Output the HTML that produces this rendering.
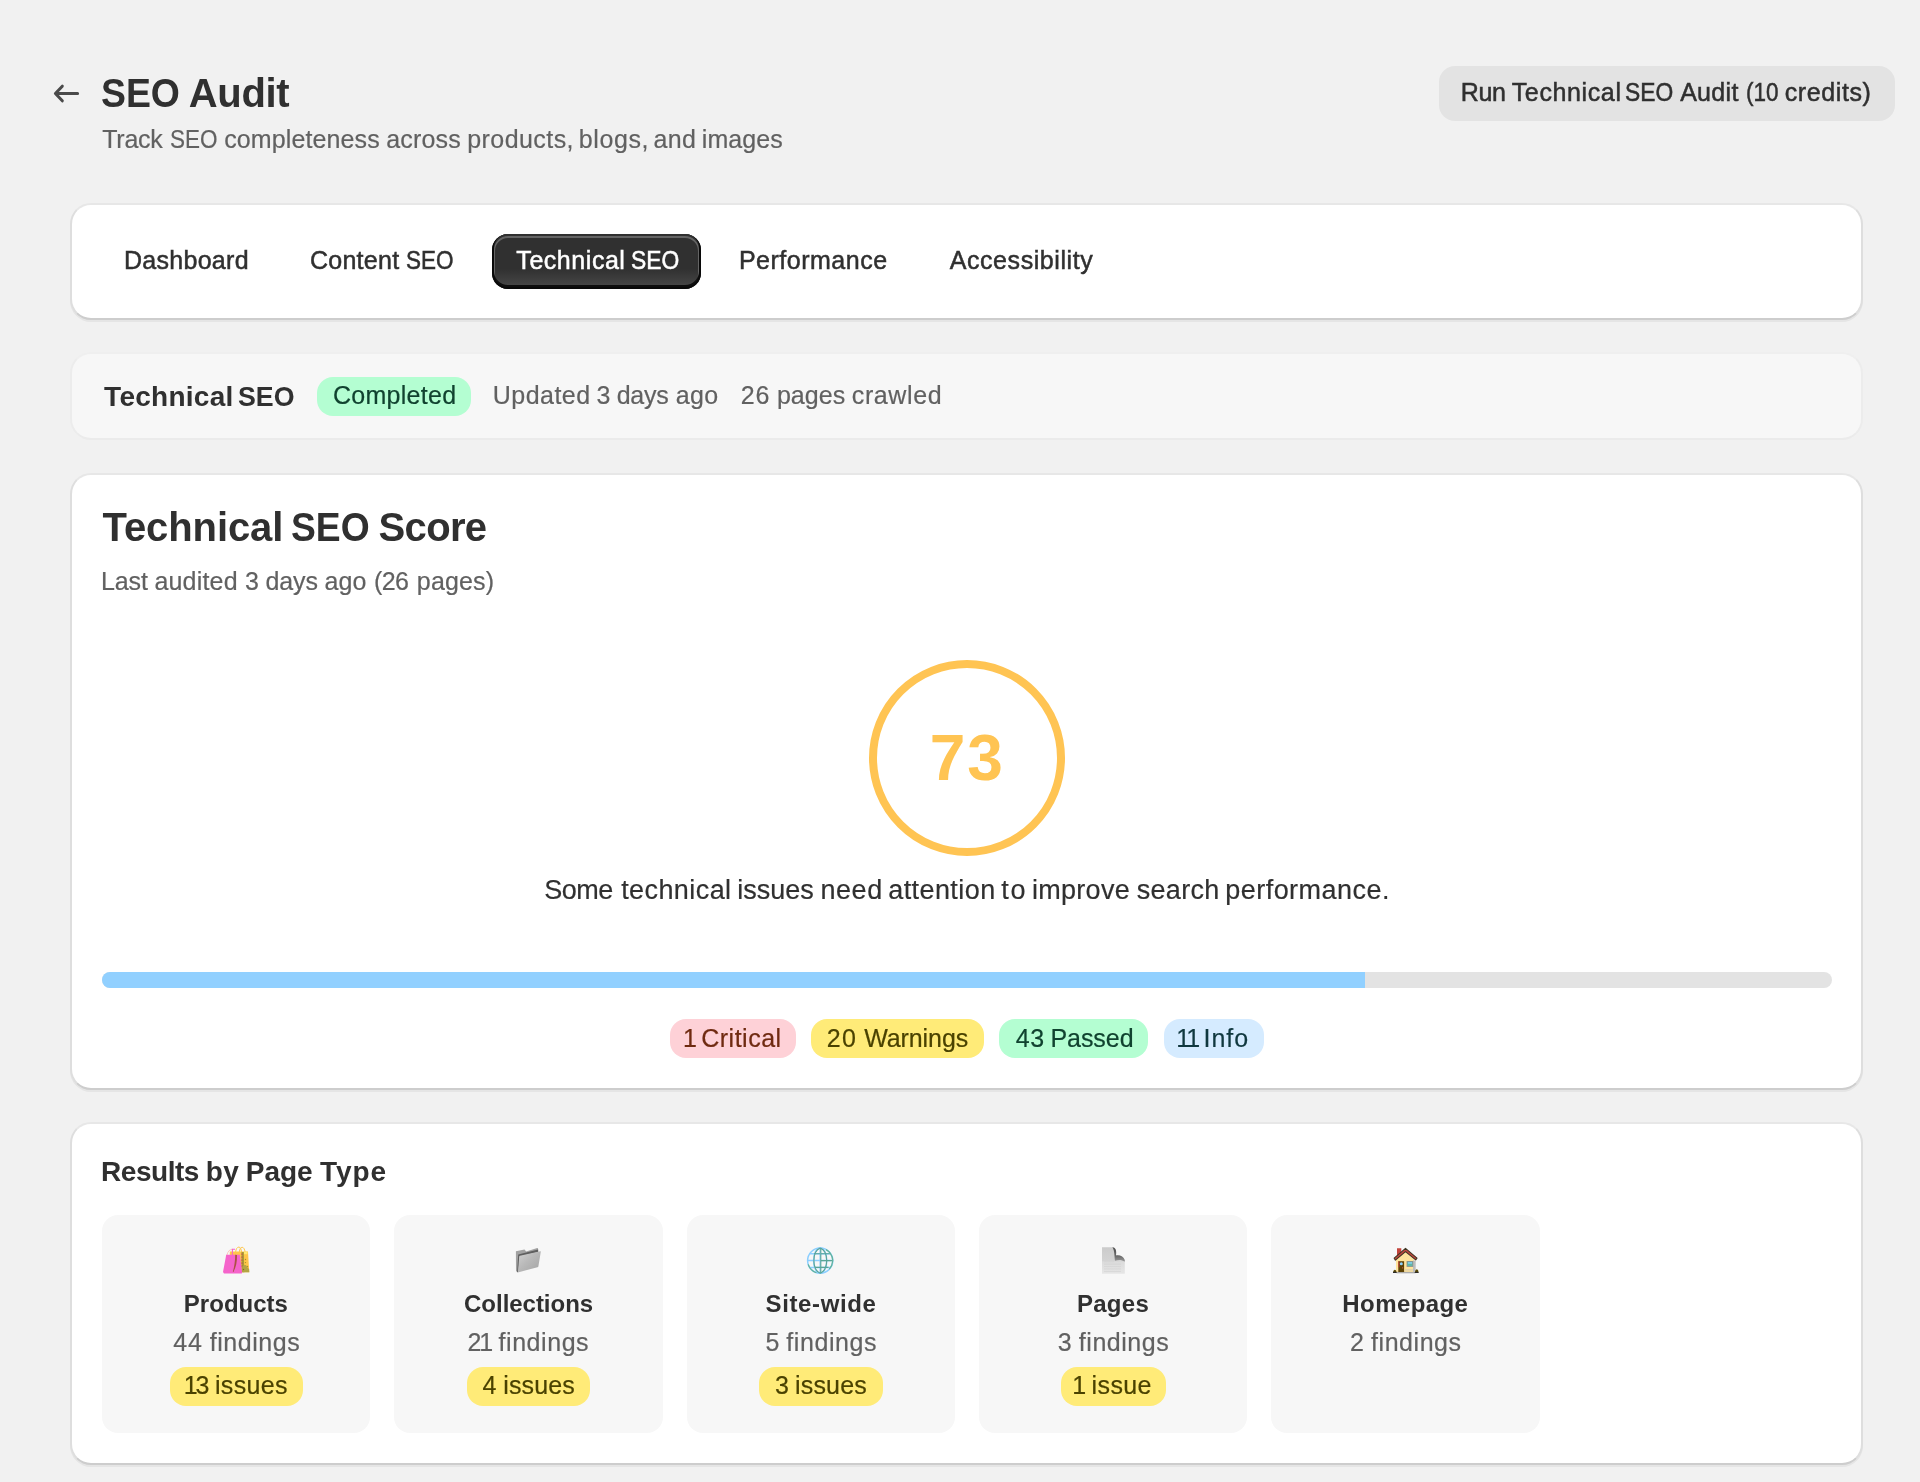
<!DOCTYPE html>
<html lang="en">
<head>
<meta charset="utf-8">
<title>SEO Audit</title>
<style>
*{box-sizing:border-box;margin:0;padding:0}
html,body{width:1920px;height:1482px;overflow:hidden}
body{background:#f1f1f1;font-family:"Liberation Sans",sans-serif;position:relative;color:#303030}
.t{position:absolute;left:0;white-space:nowrap;will-change:transform}
.t span{position:absolute;top:0}
.med{-webkit-text-stroke:.5px}
.abs{position:absolute}
.card{position:absolute;left:70px;width:1793px;background:#fff;border-radius:21px;border-style:solid;border-width:2px;border-color:#e7e7e7 #dedede #cdcdcd #dedede;box-shadow:0 2px 0 rgba(26,26,26,.05)}
#card-tabs{top:203px;height:117px}
#card-status{top:352px;height:88px;background:#f7f7f7;border-color:#efefef #ececec #ebebeb #ececec;box-shadow:none}
#card-score{top:473px;height:617px}
#card-results{top:1121.5px;height:343px}
#btn-run{left:1438.5px;top:66px;width:456px;height:55px;background:#e3e3e3;border-radius:16px}
#btn-active{left:492px;top:234px;width:209px;height:55px;border-radius:16px;background:linear-gradient(180deg,#303030 0%,#303030 63%,#4a4a4a 100%);box-shadow:inset 0 -2px 0 2px rgba(0,0,0,.8),inset 0 0 0 2px #303030,inset 0 1px 0 3px rgba(255,255,255,.25)}
.badge{position:absolute;height:39.5px;border-radius:16px}
#bd-comp{left:317px;top:376.5px;width:154.3px;background:#b4fed2}
#bd-1{left:670px;top:1018.75px;width:126px;background:#fed1d7}
#bd-2{left:811.4px;top:1018.75px;width:172.3px;background:#ffeb78}
#bd-3{left:999.1px;top:1018.75px;width:149.2px;background:#b4fed2}
#bd-4{left:1164.2px;top:1018.75px;width:99.7px;background:#d5ebff}
#ring{left:869px;top:659.75px;width:196px;height:196px;border-radius:50%;border:8px solid #ffc453}
#track{left:102px;top:972px;width:1730px;height:16px;border-radius:8px;background:#e3e3e3;overflow:hidden}
#fill{width:1263px;height:16px;background:#91d0ff}
.tile{position:absolute;top:1215px;width:268.3px;height:218.3px;background:#f7f7f7;border-radius:16px}
.tb{top:1366.75px;background:#ffeb78}
#t_title{top:73px;font-size:40px;line-height:40px;font-weight:700;color:#303030}
#t_sub{top:127px;font-size:25px;line-height:25px;font-weight:400;color:#616161;-webkit-text-stroke:.2px}
#t_run{top:80px;font-size:25px;line-height:25px;font-weight:400;color:#303030}
#t_tab1{top:248px;font-size:25px;line-height:25px;font-weight:400;color:#303030}
#t_tab2{top:248px;font-size:25px;line-height:25px;font-weight:400;color:#303030}
#t_tab3{top:248px;font-size:25px;line-height:25px;font-weight:400;color:#fff}
#t_tab4{top:248px;font-size:25px;line-height:25px;font-weight:400;color:#303030}
#t_tab5{top:248px;font-size:25px;line-height:25px;font-weight:400;color:#303030}
#t_st{top:383px;font-size:28px;line-height:28px;font-weight:700;color:#303030}
#t_comp{top:383px;font-size:25px;line-height:25px;font-weight:400;color:#10422f;-webkit-text-stroke:.2px}
#t_upd{top:383px;font-size:25px;line-height:25px;font-weight:400;color:#616161;-webkit-text-stroke:.2px}
#t_crawl{top:383px;font-size:25px;line-height:25px;font-weight:400;color:#616161;-webkit-text-stroke:.2px}
#t_score{top:507px;font-size:40px;line-height:40px;font-weight:700;color:#303030}
#t_last{top:569px;font-size:25px;line-height:25px;font-weight:400;color:#616161;-webkit-text-stroke:.2px}
#t_73{top:726px;font-size:64px;line-height:64px;font-weight:700;color:#ffc453}
#t_some{top:877px;font-size:27px;line-height:27px;font-weight:400;color:#303030;-webkit-text-stroke:.2px}
#t_b1{top:1026px;font-size:25px;line-height:25px;font-weight:400;color:#6f2a10;-webkit-text-stroke:.2px}
#t_b2{top:1026px;font-size:25px;line-height:25px;font-weight:400;color:#4a4200;-webkit-text-stroke:.2px}
#t_b3{top:1026px;font-size:25px;line-height:25px;font-weight:400;color:#10422f;-webkit-text-stroke:.2px}
#t_b4{top:1026px;font-size:25px;line-height:25px;font-weight:400;color:#10383f;-webkit-text-stroke:.2px}
#t_res{top:1158px;font-size:28px;line-height:28px;font-weight:700;color:#303030}
#t_tt0{top:1292px;font-size:24px;line-height:24px;font-weight:700;color:#303030}
#t_tf0{top:1330px;font-size:25px;line-height:25px;font-weight:400;color:#616161;-webkit-text-stroke:.2px}
#t_tb0{top:1373px;font-size:25px;line-height:25px;font-weight:400;color:#4a4200;-webkit-text-stroke:.2px}
#t_tt1{top:1292px;font-size:24px;line-height:24px;font-weight:700;color:#303030}
#t_tf1{top:1330px;font-size:25px;line-height:25px;font-weight:400;color:#616161;-webkit-text-stroke:.2px}
#t_tb1{top:1373px;font-size:25px;line-height:25px;font-weight:400;color:#4a4200;-webkit-text-stroke:.2px}
#t_tt2{top:1292px;font-size:24px;line-height:24px;font-weight:700;color:#303030}
#t_tf2{top:1330px;font-size:25px;line-height:25px;font-weight:400;color:#616161;-webkit-text-stroke:.2px}
#t_tb2{top:1373px;font-size:25px;line-height:25px;font-weight:400;color:#4a4200;-webkit-text-stroke:.2px}
#t_tt3{top:1292px;font-size:24px;line-height:24px;font-weight:700;color:#303030}
#t_tf3{top:1330px;font-size:25px;line-height:25px;font-weight:400;color:#616161;-webkit-text-stroke:.2px}
#t_tb3{top:1373px;font-size:25px;line-height:25px;font-weight:400;color:#4a4200;-webkit-text-stroke:.2px}
#t_tt4{top:1292px;font-size:24px;line-height:24px;font-weight:700;color:#303030}
#t_tf4{top:1330px;font-size:25px;line-height:25px;font-weight:400;color:#616161;-webkit-text-stroke:.2px}
</style>
</head>
<body>
<!-- page header -->
<svg class="abs" style="left:50px;top:80px" width="34" height="28" viewBox="50 80 34 28"><path d="M77.6 93.5H56M62.3 86.2L55.4 93.5L62.3 100.8" fill="none" stroke="#4a4a4a" stroke-width="3" stroke-linecap="round" stroke-linejoin="round"/></svg>
<div class="abs" id="btn-run"></div>
<!-- tabs card -->
<div class="card" id="card-tabs"></div>
<div class="abs" id="btn-active"></div>
<!-- status card -->
<div class="card" id="card-status"></div>
<div class="badge" id="bd-comp"></div>
<!-- score card -->
<div class="card" id="card-score"></div>
<div class="abs" id="ring"></div>
<div class="abs" id="track"><div id="fill"></div></div>
<div class="badge" id="bd-1"></div>
<div class="badge" id="bd-2"></div>
<div class="badge" id="bd-3"></div>
<div class="badge" id="bd-4"></div>
<!-- results card -->
<div class="card" id="card-results"></div>
<div class="tile" style="left:102.00px"></div>
<div class="badge tb" style="left:169.60px;width:133.1px"></div>
<div class="tile" style="left:394.33px"></div>
<div class="badge tb" style="left:466.83px;width:123.3px"></div>
<div class="tile" style="left:686.67px"></div>
<div class="badge tb" style="left:759.07px;width:123.5px"></div>
<div class="tile" style="left:979.00px"></div>
<div class="badge tb" style="left:1060.65px;width:105px"></div>
<div class="tile" style="left:1271.33px"></div>
<!-- tile icons (emoji drawn as inline SVG) -->
<svg class="abs" style="left:220px;top:1244px" width="32" height="32" viewBox="220 1244 32 32">
  <path d="M235.6 1252.2c.3-3.4 1.600-5 3.200-5.100 1.500 0 2.400 1.700 2.700 5M239.300 1252c.4-3.300 1.500-4.800 2.900-4.700 1.400.1 2.400 1.700 3 5" fill="none" stroke="#ffc64a" stroke-width="1"/>
  <path d="M229.800 1251.600H248l1.300 20.700H229.800z" fill="#ffc64a"/>
  <path d="M244 1251.600h3.500v2.600H244z" fill="#ffe873"/>
  <path d="M241.500 1252h2.300l.6 20.300h-2.900z" fill="#a79a35"/>
  <path d="M242 1253.500v14" stroke="#c23a5c" stroke-width="1.100" stroke-dasharray="1.300 1.700" fill="none"/>
  <path d="M242.500 1266.300c2-1.700 3.600-1.600 4.300 0 .6 1.500 1.500 2.400 2.300 2.700l.2 3.300h-6.800z" fill="#b5a544"/>
  <circle cx="245.500" cy="1259.500" r=".7" fill="#a8912c"/><circle cx="245.500" cy="1262.600" r=".7" fill="#a8912c"/><circle cx="247.500" cy="1266.500" r=".7" fill="#a8912c"/><circle cx="243.500" cy="1269.500" r=".7" fill="#7d7020"/>
  <path d="M227 1255c.8-3.600 2.600-5.600 5.400-5.800" fill="none" stroke="#fcc7c1" stroke-width="1"/>
  <path d="M232.400 1255v-5.700h2.600" fill="none" stroke="#f564cb" stroke-width="1.100"/>
  <path d="M226.200 1254.800h13.600l2.300 17.200-.3 1.400H224l-1-1.500z" fill="#f564cb"/>
  <path d="M235.200 1254.800l1.800.2c.2 6.500-1 12.500-3.600 16.900h-.6c1.700-5.300 2.300-11 2.400-17.100z" fill="#ab5142"/>
</svg>
<svg class="abs" style="left:512px;top:1244px" width="32" height="32" viewBox="512 1244 32 32">
  <defs><linearGradient id="fg" x1="0" y1="0" x2="1" y2="1"><stop offset="0" stop-color="#d2d2d2"/><stop offset=".45" stop-color="#b9b9b9"/><stop offset="1" stop-color="#a3a3a3"/></linearGradient></defs>
  <path d="M515.900 1251.300l8.600-1.800 1.700 1.900 11-3.300c.5-.1.900.2.900.7v3.200l-19.200 4.400-1 15.500-1.900-.6z" fill="#a2a2a2"/>
  <path d="M518.200 1254.600l19.900-5 .1 2.300-18.300 4.500-1.600 15.800h-1.200z" fill="#5f5f5f"/>
  <path d="M519.900 1255.800l20.500-4.600c.3 0 .5.100.4.500l-2.400 14.600c-.1.500-.4.900-1 1l-18.700 4.900c-.4.100-.7-.1-.6-.6l1.100-14.800c0-.5.300-.9.700-1z" fill="url(#fg)"/>
</svg>
<svg class="abs" style="left:804px;top:1244px" width="32" height="32" viewBox="804 1244 32 32">
  <g fill="none" stroke-width="1.500">
    <circle cx="820.200" cy="1260.600" r="12.600" stroke="#8ccfff"/>
    <path d="M807.600 1260.600h25.200M809.600 1253.800h21.200M809.600 1267.400h21.200" stroke="#8ccfff"/>
    <path d="M820.200 1248v25.200" stroke="#8ccfff"/>
    <ellipse cx="820.200" cy="1260.600" rx="6.600" ry="12.600" stroke="#8ccfff"/>
    <path d="M820.800 1248v25.200" stroke="#5aa596" stroke-width="1.100"/>
    <path d="M821 1253.800h9.500M821 1260.600h11.600M815 1267.400h13.500M814 1253.800h6" stroke="#5aa596" stroke-width="1.100"/>
    <path d="M820.200 1248c-8.400 3.400-8.400 21.800 0 25.200M820.200 1248c8.600 3.400 8.600 21.800 0 25.200" stroke="#5aa596" stroke-width="1.100"/>
    <path d="M826 1249.600c4 2 6.400 5.800 6.800 11-.3 3.500-1.500 6.300-3.500 8.500M808.200 1264.400c1.300 4 4.300 7 8.200 8.300" stroke="#62b39b" stroke-width="1.200"/>
  </g>
</svg>
<svg class="abs" style="left:1097px;top:1244px" width="32" height="32" viewBox="1097 1244 32 32">
  <defs><linearGradient id="pg" x1="0" y1="0" x2="0" y2="1"><stop offset="0" stop-color="#cbcbcb"/><stop offset=".5" stop-color="#d3d3d3"/><stop offset=".56" stop-color="#dcdcdc"/><stop offset="1" stop-color="#e6e6e6"/></linearGradient>
  <linearGradient id="pc" x1="0" y1="0" x2="0" y2="1"><stop offset="0" stop-color="#4e4e4e"/><stop offset=".6" stop-color="#6a6a6a"/><stop offset="1" stop-color="#9a9a9a"/></linearGradient></defs>
  <path d="M1102 1247.200h10.500c2.500.3 3.500 2.300 3.500 4.800v3.300c4-.5 7.500 1.200 8.800 4.700v13.500c0 .2-.1.300-.3.300h-22.200c-.2 0-.3-.1-.3-.3z" fill="url(#pg)"/>
  <path d="M1112.400 1247.300c3 .4 3.900 2.600 3.800 5.700l-.2 2.400c4-.6 7.600 1 8.800 4.800l-.1 1.500c-2.700-2-6.200-2.100-9.700-.9-.7-4.800-.3-10.300-2.600-13.500z" fill="url(#pc)"/>
  <path d="M1104 1261.800h10M1104 1264.200h17M1104 1266.600h17M1104 1269h17M1104 1271.400h17" stroke="#d2d2d2" stroke-width=".7"/>
</svg>
<svg class="abs" style="left:1389px;top:1244px" width="32" height="32" viewBox="1389 1244 32 32">
  <path d="M1397 1248.200h4.300v6.500l-4.300 3.500z" fill="#c3443c"/>
  <path d="M1396 1260l9.500-8.200 8.700 7.600v13.400h-18.200z" fill="#ffe49c"/>
  <path d="M1413 1260.500h2.700v11.300h-2.700z" fill="#bdbdbd"/>
  <path d="M1396.500 1271.800h19v1.500h-19z" fill="#ababab"/>
  <path d="M1394.200 1258.200l11.300-9.800 11.500 9.700-1.300 1.800-10.200-8.300-10.100 8.600z" fill="#c3473e" stroke="#3f3522" stroke-width="1.100" stroke-linejoin="round"/>
  <path d="M1398.300 1261.200h5.800v10.800h-5.800z" fill="#5e4305"/>
  <path d="M1398.300 1261.200h1v6h-1z" fill="#c3443c"/>
  <circle cx="1401.300" cy="1263.800" r="1.500" fill="#8fd3ff"/>
  <circle cx="1402.600" cy="1267.800" r=".6" fill="#e0584f"/>
  <path d="M1406.600 1261h6.600v5.900h-6.600z" fill="#8f8f8f"/>
  <path d="M1407.400 1261.800h5v4.300h-5z" fill="#5fb8a7"/>
  <path d="M1408 1262.300h4v1.300h-4z" fill="#8fd3ff"/>
  <path d="M1405.500 1269.800h7.500" stroke="#b9b9c4" stroke-width="1.200" stroke-dasharray="1 1"/>
  <path d="M1393 1272.800c.3-2 1-3 1.800-3 .9 0 1.600 1 1.800 3z" fill="#5b4a06"/>
  <path d="M1414.800 1272.800c.3-2.300 1.100-3.500 2-3.500.9 0 1.700 1.300 1.800 3.500z" fill="#5b4a06"/>
  <path d="M1393 1272.100c.8-.4 2.800-.4 3.600 0v.9h-3.600zM1414.800 1272.100c.8-.4 2.800-.4 3.700 0v.9h-3.700z" fill="#2a2a2a"/>
</svg>

<div class="t" id="t_title"><span style="left:101.04px;transform:scaleX(0.9344);transform-origin:0 0">SEO</span> <span style="left:188.67px;letter-spacing:-0.300px">Audit</span></div>
<div class="t" id="t_sub"><span style="left:102.31px;letter-spacing:-0.266px">Track</span> <span style="left:170.06px;transform:scaleX(0.8994);transform-origin:0 0">SEO</span> <span style="left:224.20px;letter-spacing:0.112px">completeness</span> <span style="left:386.15px;letter-spacing:0.208px">across</span> <span style="left:467.24px;letter-spacing:0.434px">products,</span> <span style="left:578.85px;letter-spacing:0.573px">blogs,</span> <span style="left:653.54px;letter-spacing:0.364px">and</span> <span style="left:701.79px;letter-spacing:0.090px">images</span></div>
<div class="t med" id="t_run"><span style="left:1460.75px;letter-spacing:-0.350px">Run</span> <span style="left:1511.74px;letter-spacing:0.622px">Technical</span> <span style="left:1625.29px;transform:scaleX(0.9125);transform-origin:0 0">SEO</span> <span style="left:1680.14px;letter-spacing:0.308px">Audit</span> <span style="left:1746.08px;transform:scaleX(0.8986);transform-origin:0 0">(10</span> <span style="left:1784.78px;letter-spacing:0.599px">credits)</span></div>
<div class="t med" id="t_tab1"><span style="left:123.88px;letter-spacing:0.301px">Dashboard</span></div>
<div class="t med" id="t_tab2"><span style="left:309.88px;letter-spacing:0.276px">Content</span> <span style="left:405.78px;transform:scaleX(0.8994);transform-origin:0 0">SEO</span></div>
<div class="t med" id="t_tab3"><span style="left:516.34px;letter-spacing:0.547px">Technical</span> <span style="left:630.85px;transform:scaleX(0.9135);transform-origin:0 0">SEO</span></div>
<div class="t med" id="t_tab4"><span style="left:738.88px;letter-spacing:0.511px">Performance</span></div>
<div class="t med" id="t_tab5"><span style="left:949.69px;letter-spacing:0.574px">Accessibility</span></div>
<div class="t" id="t_st"><span style="left:104.12px;letter-spacing:0.266px">Technical</span> <span style="left:237.93px;transform:scaleX(0.9546);transform-origin:0 0">SEO</span></div>
<div class="t" id="t_comp"><span style="left:332.88px;letter-spacing:0.290px">Completed</span></div>
<div class="t" id="t_upd"><span style="left:492.85px;letter-spacing:0.454px">Updated</span> <span style="left:596.55px">3</span> <span style="left:616.67px;letter-spacing:-0.198px">days</span> <span style="left:675.84px;letter-spacing:0.296px">ago</span></div>
<div class="t" id="t_crawl"><span style="left:740.83px;letter-spacing:0.738px">26</span> <span style="left:776.91px;letter-spacing:0.057px">pages</span> <span style="left:851.78px;letter-spacing:0.611px">crawled</span></div>
<div class="t" id="t_score"><span style="left:102.54px;letter-spacing:-0.092px">Technical</span> <span style="left:291.06px;transform:scaleX(0.9307);transform-origin:0 0">SEO</span> <span style="left:378.53px;letter-spacing:-0.649px">Score</span></div>
<div class="t" id="t_last"><span style="left:100.88px;letter-spacing:-0.032px">Last</span> <span style="left:154.45px;letter-spacing:0.187px">audited</span> <span style="left:245.00px">3</span> <span style="left:265.62px;letter-spacing:-0.160px">days</span> <span style="left:324.46px;letter-spacing:0.064px">ago</span> <span style="left:373.92px;letter-spacing:-0.578px">(26</span> <span style="left:416.86px;letter-spacing:0.138px">pages)</span></div>
<div class="t" id="t_73"><span style="left:929.70px">7</span> <span style="left:967.30px">3</span></div>
<div class="t" id="t_some"><span style="left:544.35px;letter-spacing:-0.497px">Some</span> <span style="left:621.14px;letter-spacing:0.426px">technical</span> <span style="left:737.20px;letter-spacing:0.013px">issues</span> <span style="left:820.47px;letter-spacing:0.542px">need</span> <span style="left:888.19px;letter-spacing:0.426px">attention</span> <span style="left:1001.28px;letter-spacing:1.816px">to</span> <span style="left:1031.94px;letter-spacing:0.292px">improve</span> <span style="left:1136.71px;letter-spacing:0.299px">search</span> <span style="left:1225.24px;letter-spacing:0.468px">performance.</span></div>
<div class="t" id="t_b1"><span style="left:683.00px">1</span> <span style="left:701.15px;letter-spacing:0.517px">Critical</span></div>
<div class="t" id="t_b2"><span style="left:826.87px;letter-spacing:1.166px">20</span> <span style="left:864.14px;letter-spacing:-0.078px">Warnings</span></div>
<div class="t" id="t_b3"><span style="left:1015.71px;letter-spacing:0.534px">43</span> <span style="left:1050.45px;letter-spacing:-0.055px">Passed</span></div>
<div class="t" id="t_b4"><span style="left:1176.30px;letter-spacing:-2.200px">11</span> <span style="left:1203.47px;letter-spacing:0.993px">Info</span></div>
<div class="t" id="t_res"><span style="left:101.10px;letter-spacing:-0.472px">Results</span> <span style="left:205.72px;letter-spacing:0.500px">by</span> <span style="left:245.80px;letter-spacing:-0.035px">Page</span> <span style="left:319.95px;letter-spacing:0.989px">Type</span></div>
<div class="t" id="t_tt0"><span style="left:183.82px;letter-spacing:0.019px">Products</span></div>
<div class="t" id="t_tf0"><span style="left:173.25px;letter-spacing:0.958px">44</span> <span style="left:209.74px;letter-spacing:0.543px">findings</span></div>
<div class="t" id="t_tb0"><span style="left:183.86px;letter-spacing:-2.200px">13</span> <span style="left:214.98px;letter-spacing:0.330px">issues</span></div>
<div class="t" id="t_tt1"><span style="left:464.06px;letter-spacing:-0.027px">Collections</span></div>
<div class="t" id="t_tf1"><span style="left:467.52px;letter-spacing:-2.200px">21</span> <span style="left:498.52px;letter-spacing:0.558px">findings</span></div>
<div class="t" id="t_tb1"><span style="left:482.48px">4</span> <span style="left:503.16px;letter-spacing:0.167px">issues</span></div>
<div class="t" id="t_tt2"><span style="left:765.51px;letter-spacing:0.631px">Site-wide</span></div>
<div class="t" id="t_tf2"><span style="left:765.41px">5</span> <span style="left:786.30px;letter-spacing:0.574px">findings</span></div>
<div class="t" id="t_tb2"><span style="left:774.96px">3</span> <span style="left:794.99px;letter-spacing:0.185px">issues</span></div>
<div class="t" id="t_tt3"><span style="left:1076.88px;letter-spacing:0.289px">Pages</span></div>
<div class="t" id="t_tf3"><span style="left:1057.80px">3</span> <span style="left:1078.80px;letter-spacing:0.543px">findings</span></div>
<div class="t" id="t_tb3"><span style="left:1072.15px">1</span> <span style="left:1091.61px;letter-spacing:0.366px">issue</span></div>
<div class="t" id="t_tt4"><span style="left:1342.37px;letter-spacing:0.407px">Homepage</span></div>
<div class="t" id="t_tf4"><span style="left:1350.08px">2</span> <span style="left:1371.06px;letter-spacing:0.544px">findings</span></div>
</body>
</html>
